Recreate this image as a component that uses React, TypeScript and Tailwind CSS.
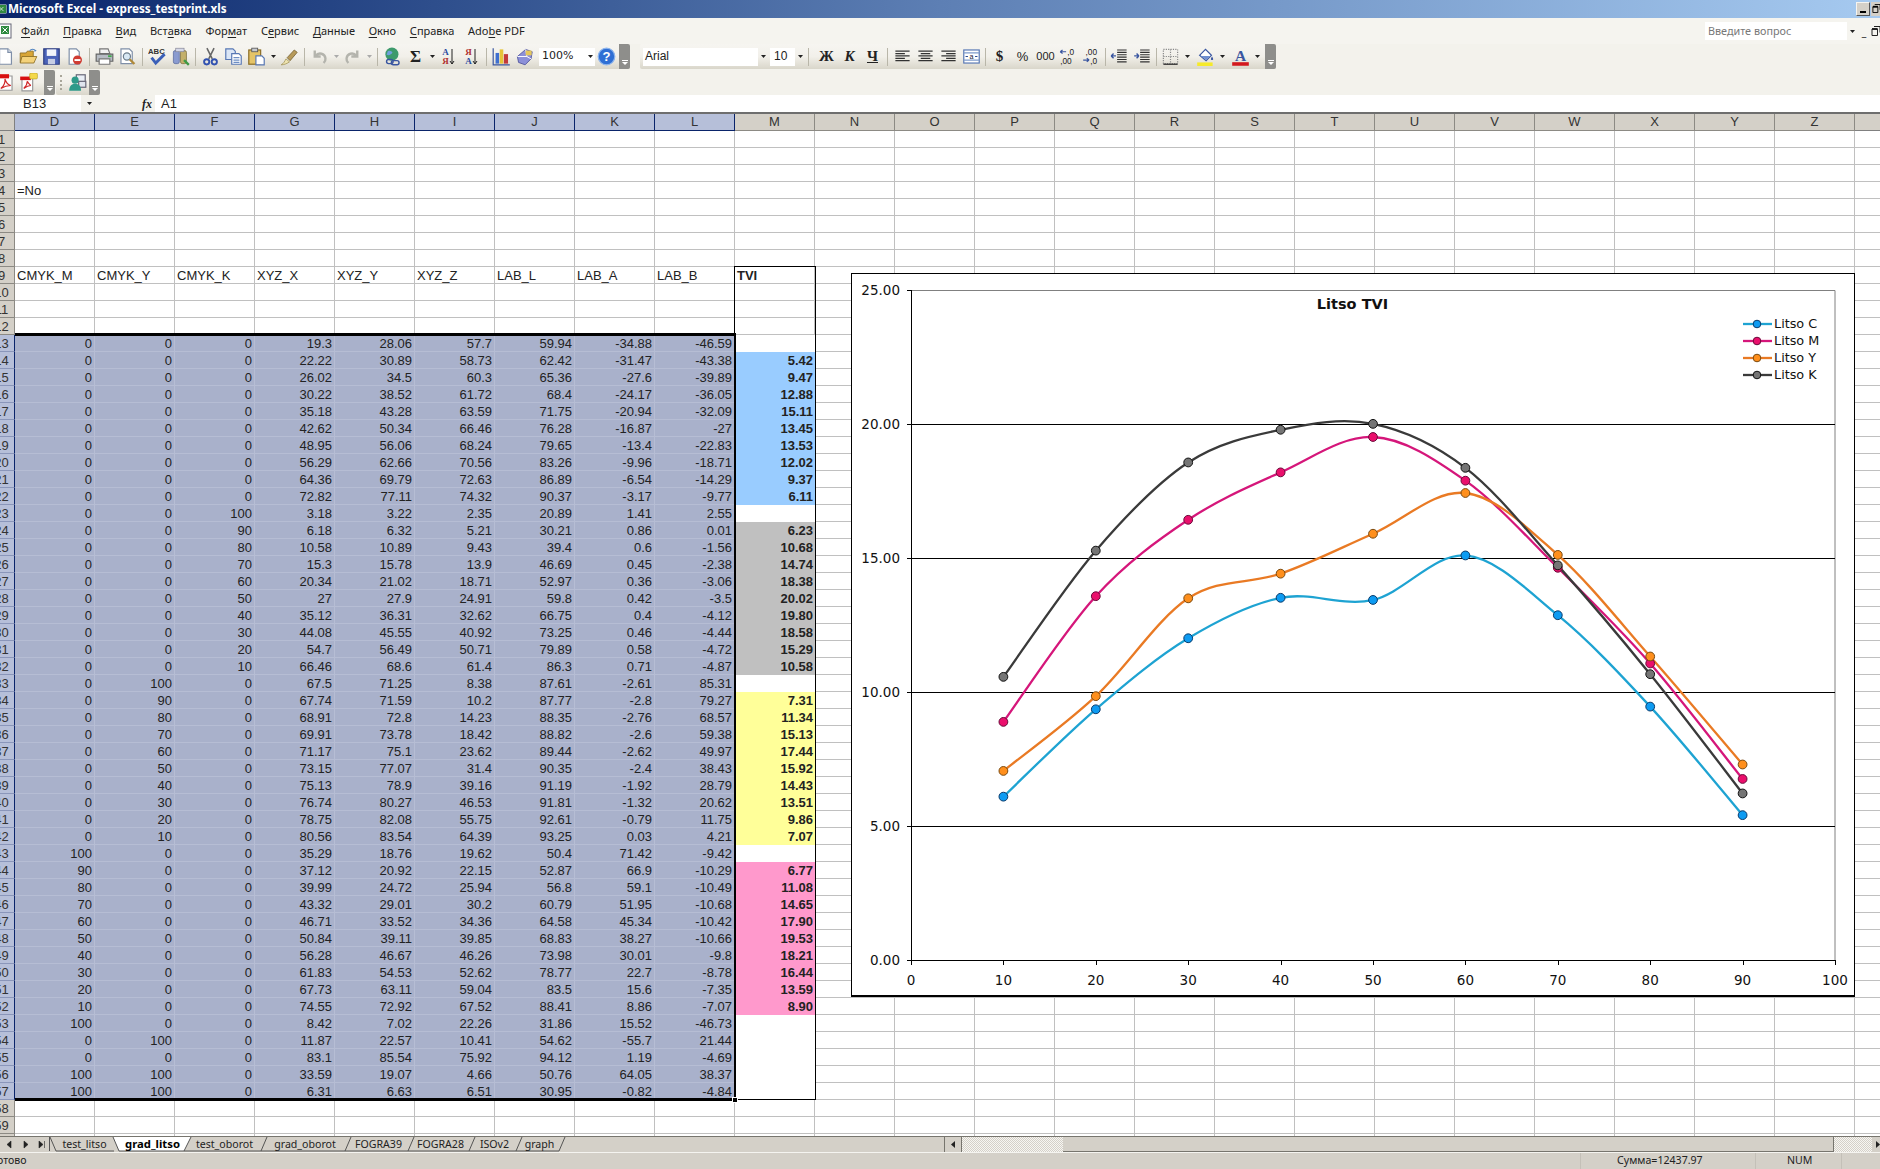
import type { ReactNode } from "react";

const COLS = ["D", "E", "F", "G", "H", "I", "J", "K", "L", "M", "N", "O", "P", "Q", "R", "S", "T", "U", "V", "W", "X", "Y", "Z"];

// rows 13..57: CMYK_M CMYK_Y CMYK_K XYZ_X XYZ_Y XYZ_Z LAB_L LAB_A LAB_B | TVI
const DATA = `0 0 0 19.3 28.06 57.7 59.94 -34.88 -46.59 -
0 0 0 22.22 30.89 58.73 62.42 -31.47 -43.38 5.42
0 0 0 26.02 34.5 60.3 65.36 -27.6 -39.89 9.47
0 0 0 30.22 38.52 61.72 68.4 -24.17 -36.05 12.88
0 0 0 35.18 43.28 63.59 71.75 -20.94 -32.09 15.11
0 0 0 42.62 50.34 66.46 76.28 -16.87 -27 13.45
0 0 0 48.95 56.06 68.24 79.65 -13.4 -22.83 13.53
0 0 0 56.29 62.66 70.56 83.26 -9.96 -18.71 12.02
0 0 0 64.36 69.79 72.63 86.89 -6.54 -14.29 9.37
0 0 0 72.82 77.11 74.32 90.37 -3.17 -9.77 6.11
0 0 100 3.18 3.22 2.35 20.89 1.41 2.55 -
0 0 90 6.18 6.32 5.21 30.21 0.86 0.01 6.23
0 0 80 10.58 10.89 9.43 39.4 0.6 -1.56 10.68
0 0 70 15.3 15.78 13.9 46.69 0.45 -2.38 14.74
0 0 60 20.34 21.02 18.71 52.97 0.36 -3.06 18.38
0 0 50 27 27.9 24.91 59.8 0.42 -3.5 20.02
0 0 40 35.12 36.31 32.62 66.75 0.4 -4.12 19.80
0 0 30 44.08 45.55 40.92 73.25 0.46 -4.44 18.58
0 0 20 54.7 56.49 50.71 79.89 0.58 -4.72 15.29
0 0 10 66.46 68.6 61.4 86.3 0.71 -4.87 10.58
0 100 0 67.5 71.25 8.38 87.61 -2.61 85.31 -
0 90 0 67.74 71.59 10.2 87.77 -2.8 79.27 7.31
0 80 0 68.91 72.8 14.23 88.35 -2.76 68.57 11.34
0 70 0 69.91 73.78 18.42 88.82 -2.6 59.38 15.13
0 60 0 71.17 75.1 23.62 89.44 -2.62 49.97 17.44
0 50 0 73.15 77.07 31.4 90.35 -2.4 38.43 15.92
0 40 0 75.13 78.9 39.16 91.19 -1.92 28.79 14.43
0 30 0 76.74 80.27 46.53 91.81 -1.32 20.62 13.51
0 20 0 78.75 82.08 55.75 92.61 -0.79 11.75 9.86
0 10 0 80.56 83.54 64.39 93.25 0.03 4.21 7.07
100 0 0 35.29 18.76 19.62 50.4 71.42 -9.42 -
90 0 0 37.12 20.92 22.15 52.87 66.9 -10.29 6.77
80 0 0 39.99 24.72 25.94 56.8 59.1 -10.49 11.08
70 0 0 43.32 29.01 30.2 60.79 51.95 -10.68 14.65
60 0 0 46.71 33.52 34.36 64.58 45.34 -10.42 17.90
50 0 0 50.84 39.11 39.85 68.83 38.27 -10.66 19.53
40 0 0 56.28 46.67 46.26 73.98 30.01 -9.8 18.21
30 0 0 61.83 54.53 52.62 78.77 22.7 -8.78 16.44
20 0 0 67.73 63.11 59.04 83.5 15.6 -7.35 13.59
10 0 0 74.55 72.92 67.52 88.41 8.86 -7.07 8.90
100 0 0 8.42 7.02 22.26 31.86 15.52 -46.73 -
0 100 0 11.87 22.57 10.41 54.62 -55.7 21.44 -
0 0 0 83.1 85.54 75.92 94.12 1.19 -4.69 -
100 100 0 33.59 19.07 4.66 50.76 64.05 38.37 -
100 100 0 6.31 6.63 6.51 30.95 -0.82 -4.84 -`
  .split("\n")
  .map((l) => l.split(" "));

const HEAD9 = ["CMYK_M", "CMYK_Y", "CMYK_K", "XYZ_X", "XYZ_Y", "XYZ_Z", "LAB_L", "LAB_A", "LAB_B"];

const SERIES = [
  { name: "Litso C", line: "#1ea3d2", dot: "#0d9bf2", edge: "#0a3a6a", v: [6.11, 9.37, 12.02, 13.53, 13.45, 15.11, 12.88, 9.47, 5.42] },
  { name: "Litso M", line: "#d5167a", dot: "#ea0f6c", edge: "#6a0a3a", v: [8.9, 13.59, 16.44, 18.21, 19.53, 17.9, 14.65, 11.08, 6.77] },
  { name: "Litso Y", line: "#e97a24", dot: "#ff8f1c", edge: "#7a4a10", v: [7.07, 9.86, 13.51, 14.43, 15.92, 17.44, 15.13, 11.34, 7.31] },
  { name: "Litso K", line: "#3a3a3a", dot: "#757575", edge: "#111111", v: [10.58, 15.29, 18.58, 19.8, 20.02, 18.38, 14.74, 10.68, 6.23] },
];

const px = (x: number) => 60 + x * 9.24;
const py = (v: number) => 687.4 - v * 26.8;

function smooth(v: number[]) {
  const p = v.map((y, i) => [px((i + 1) * 10), py(y)]);
  let d = `M${p[0][0]} ${p[0][1]}`;
  for (let i = 0; i < p.length - 1; i++) {
    const a = p[i - 1] || p[i];
    const b = p[i];
    const c = p[i + 1];
    const e = p[i + 2] || c;
    d += `C${b[0] + (c[0] - a[0]) / 6} ${b[1] + (c[1] - a[1]) / 6} ${c[0] - (e[0] - b[0]) / 6} ${c[1] - (e[1] - b[1]) / 6} ${c[0]} ${c[1]}`;
  }
  return d;
}

function Chart() {
  const chartFont = "'DejaVu Sans', sans-serif";
  return (
    <svg width="1005" height="724" viewBox="0 0 1005 724" className="block">
      <rect x="0.5" y="0.5" width="1003" height="722" fill="#fff" stroke="#000" />
      <line x1="0" y1="723" x2="1004" y2="723" stroke="#000" strokeWidth="2" />
      <path d="M60 17.5H984V687.5" fill="none" stroke="#808080" />
      {[5, 10, 15, 20].map((v) => (
        <line key={v} x1="60" x2="984" y1={Math.round(py(v)) + 0.5} y2={Math.round(py(v)) + 0.5} stroke="#000" />
      ))}
      <path d="M60.5 17V692M56 687.5H984" fill="none" stroke="#000" />
      {[0, 5, 10, 15, 20, 25].map((v) => (
        <g key={v}>
          <line x1="56" x2="60" y1={Math.round(py(v)) + 0.5} y2={Math.round(py(v)) + 0.5} stroke="#000" />
          <text x="49" y={py(v)} textAnchor="end" dominantBaseline="central" fontSize="13.5" fontFamily={chartFont} fill="#111">
            {v.toFixed(2)}
          </text>
        </g>
      ))}
      {[0, 10, 20, 30, 40, 50, 60, 70, 80, 90, 100].map((x) => (
        <g key={x}>
          <line x1={Math.round(px(x)) + 0.5} x2={Math.round(px(x)) + 0.5} y1="687" y2="692" stroke="#000" />
          <text x={px(x)} y="707" textAnchor="middle" dominantBaseline="central" fontSize="13.5" fontFamily={chartFont} fill="#111">
            {x}
          </text>
        </g>
      ))}
      <text x="501.5" y="31" textAnchor="middle" dominantBaseline="central" fontSize="14.5" fontWeight="700" fontFamily={chartFont} fill="#111">
        Litso TVI
      </text>
      {SERIES.map((s) => (
        <path key={s.name} d={smooth(s.v)} fill="none" stroke={s.line} strokeWidth="2.3" />
      ))}
      {SERIES.map((s) =>
        s.v.map((y, i) => (
          <circle key={s.name + i} cx={px((i + 1) * 10)} cy={py(y)} r="4.4" fill={s.dot} stroke={s.edge} strokeWidth="1" />
        )),
      )}
      {SERIES.map((s, i) => (
        <g key={s.name}>
          <line x1="892" x2="921" y1={51 + i * 17} y2={51 + i * 17} stroke={s.line} strokeWidth="2.3" />
          <circle cx="906" cy={51 + i * 17} r="3.8" fill={s.dot} stroke={s.edge} />
          <text x="923" y={50.5 + i * 17} dominantBaseline="central" fontSize="12.8" fontFamily={chartFont} fill="#111">
            {s.name}
          </text>
        </g>
      ))}
    </svg>
  );
}

function Ico({ children }: { children: ReactNode }) {
  return (
    <svg viewBox="0 0 16 16" className="w-[19px] h-[19px] block">
      {children}
    </svg>
  );
}

const I = {
  doc: <Ico><path d="M3 1.500h7l3 3v10H3z" fill="#fff" stroke="#7f8fa8" /><path d="M10 1.500v3h3" fill="#dfe6f0" stroke="#7f8fa8" /></Ico>,
  open: <Ico><path d="M1 5h5l1-1.500h5V13H1z" fill="#d9a637" stroke="#8a6a20" strokeWidth=".7" /><path d="M2.500 8H15l-2.500 5.500H1z" fill="#f4d27a" stroke="#8a6a20" strokeWidth=".7" /><path d="M9 3c1.500-1.500 3.500-1.500 5 0l-1 .5" fill="none" stroke="#4a7fbe" /></Ico>,
  save: <Ico><path d="M1.500 1.500h13v13h-13z" fill="#4a62b8" stroke="#2c3c80" /><rect x="4" y="2" width="8" height="5.500" fill="#f2f4fa" /><rect x="5" y="10" width="6" height="4.500" fill="#c6cde4" /></Ico>,
  perm: <Ico><path d="M3.500 1.500h6l2.500 2.500v10.500H3.500z" fill="#fff" stroke="#7f8fa8" /><circle cx="10.500" cy="11" r="3.800" fill="#cf3b32" /><rect x="8" y="10.200" width="5" height="1.600" fill="#fff" /></Ico>,
  print: <Ico><path d="M4 1.500h7l1.500 4H4z" fill="#f2f2f2" stroke="#777" /><path d="M1 6h14v6H1z" fill="#b7bcc4" stroke="#666" /><path d="M3.500 10h9v4.500h-9z" fill="#fff" stroke="#777" /><rect x="11" y="7" width="3" height="1.500" fill="#3fa84a" /></Ico>,
  preview: <Ico><path d="M2.500 1.500h7l2.500 2.500v10H2.500z" fill="#fff" stroke="#7f8fa8" /><circle cx="7.500" cy="8" r="3" fill="#d8e8f4" stroke="#6b7c8c" /><path d="M9.800 10.300l4 4" stroke="#b08a3a" strokeWidth="2" /></Ico>,
  spell: <Ico><text x="0" y="6" fontSize="6.500" fontWeight="700" fontFamily="'Liberation Sans',sans-serif" fill="#333">ABC</text><path d="M3 9l3.500 4.500L14 6" fill="none" stroke="#3a5fb8" strokeWidth="2.400" /></Ico>,
  research: <Ico><rect x="2" y="3" width="5" height="11" rx="1.500" fill="#8a9bd0" stroke="#55659a" strokeWidth=".6" /><rect x="8" y="3" width="5" height="11" rx="1.500" fill="#c4b06a" stroke="#776a3a" strokeWidth=".6" /><rect x="4" y="1" width="7" height="3" fill="#d5d8e8" stroke="#778" strokeWidth=".5" /><path d="M11 11l4 4" stroke="#3f9a45" strokeWidth="2" /></Ico>,
  cut: <Ico><path d="M5 1l4.500 9M11 1l-4.500 9" stroke="#666" strokeWidth="1.300" /><circle cx="4.800" cy="12.500" r="2.200" fill="none" stroke="#3252b0" strokeWidth="1.600" /><circle cx="11.200" cy="12.500" r="2.200" fill="none" stroke="#3252b0" strokeWidth="1.600" /></Ico>,
  copy: <Ico><path d="M1.500 1.500h6l2 2v7h-8z" fill="#dbe6f6" stroke="#5878b4" /><path d="M6.500 5.500h6l2 2v7h-8z" fill="#fff" stroke="#5878b4" /><path d="M8 9h5M8 11h5M8 13h5" stroke="#6d8ec4" /></Ico>,
  paste: <Ico><rect x="1.500" y="2.500" width="10" height="12" fill="#e5c467" stroke="#8a6c25" /><rect x="4" y="1" width="5" height="3" fill="#c7cbd2" stroke="#555" strokeWidth=".7" /><path d="M7.500 7.500h5l2 2v5.500h-7z" fill="#fff" stroke="#5878b4" /></Ico>,
  painter: <Ico><path d="M1 15c2-1 3-3 4-5l3 2.500c-2 1.500-4.500 2.500-7 2.500z" fill="#efe4b0" stroke="#9a8a4a" strokeWidth=".6" /><path d="M6 9l2.500 2.500 6-7L12 2.500z" fill="#b79a5a" stroke="#6a5526" strokeWidth=".6" /></Ico>,
  undo: <Ico><path d="M4 3v5h5M4.500 7.500c3-3.500 8-2 8.500 2 .2 1.500-.5 3-1.500 4" fill="none" stroke="#b4b4ad" strokeWidth="2" /></Ico>,
  redo: <Ico><path d="M12 3v5H7M11.500 7.500c-3-3.500-8-2-8.500 2-.2 1.500.5 3 1.500 4" fill="none" stroke="#b4b4ad" strokeWidth="2" /></Ico>,
  link: <Ico><circle cx="7.500" cy="6" r="5.500" fill="#3d9a6c" /><path d="M4 3.500c2-1 3 0 4 1-1 2-3 3-5 2z" fill="#6f9fdc" /><rect x="3" y="10.500" width="5.500" height="3.500" rx="1.700" fill="none" stroke="#3a56a0" strokeWidth="1.200" /><rect x="7" y="11.500" width="6.500" height="3.500" rx="1.700" fill="none" stroke="#3a56a0" strokeWidth="1.200" /></Ico>,
  chart: <Ico><path d="M1 1v14h14" fill="none" stroke="#3a56a0" /><rect x="3" y="5" width="3" height="9" fill="#3f6fd0" /><rect x="6.500" y="2" width="3" height="12" fill="#e6c437" /><rect x="10" y="6" width="3.500" height="8" fill="#c23a3a" /></Ico>,
  draw: <Ico><path d="M2 8L9 2l5.500 2-1 6-5 5L3 13z" fill="#8c90d8" stroke="#4a4f98" strokeWidth=".7" /><path d="M9 2l1 6 3.500 2M10 8l-8 0" fill="none" stroke="#fff" strokeWidth=".8" /><rect x="9" y="3" width="5" height="4" fill="#e5c75a" /></Ico>,
  help: <Ico><circle cx="8" cy="8" r="7" fill="#2f6fd4" stroke="#8db4ec" /><text x="8" y="12" textAnchor="middle" fontSize="11" fontWeight="700" fontFamily="'Liberation Sans',sans-serif" fill="#fff">?</text></Ico>,
  alignL: <Ico><path d="M2 3.500h12M2 5.500h8M2 7.500h12M2 9.500h8M2 11.500h12" stroke="#333" /></Ico>,
  alignC: <Ico><path d="M2 3.500h12M4 5.500h8M2 7.500h12M4 9.500h8M2 11.500h12" stroke="#333" /></Ico>,
  alignR: <Ico><path d="M2 3.500h12M6 5.500h8M2 7.500h12M6 9.500h8M2 11.500h12" stroke="#333" /></Ico>,
  merge: <Ico><rect x="1.500" y="2.500" width="13" height="11" fill="#fff" stroke="#5878b4" /><path d="M1.500 5h13M1.500 11h13" stroke="#7f9ccc" /><text x="8" y="10.200" textAnchor="middle" fontSize="6" fontFamily="'Liberation Sans',sans-serif" fill="#223">a</text><path d="M3 8h2M11 8h2" stroke="#2a4a90" /></Ico>,
  incD: <Ico><path d="M1 4h5M1 4l2-1.500M1 4l2 1.500" stroke="#3a56a0" /><text x="7" y="6.500" fontSize="7" fontFamily="'Liberation Sans',sans-serif" fill="#222">,0</text><text x="1" y="14" fontSize="7" fontFamily="'Liberation Sans',sans-serif" fill="#222">,00</text></Ico>,
  decD: <Ico><text x="3" y="6.500" fontSize="7" fontFamily="'Liberation Sans',sans-serif" fill="#222">,00</text><path d="M1 11h5M6 11l-2-1.500M6 11l-2 1.500" stroke="#3a56a0" /><text x="7" y="14" fontSize="7" fontFamily="'Liberation Sans',sans-serif" fill="#222">,0</text></Ico>,
  indL: <Ico><path d="M6 2.500h8M6 4.500h8M6 6.500h8M6 8.500h8M6 10.500h8M6 12.500h8" stroke="#333" /><path d="M5 7.500H1M1 7.500l2-2M1 7.500l2 2" stroke="#3a56a0" strokeWidth="1.200" /></Ico>,
  indR: <Ico><path d="M6 2.500h8M6 4.500h8M6 6.500h8M6 8.500h8M6 10.500h8M6 12.500h8" stroke="#333" /><path d="M1 7.500h4M5 7.500l-2-2M5 7.500l-2 2" stroke="#3a56a0" strokeWidth="1.200" /></Ico>,
  border: <Ico><rect x="2" y="2" width="12" height="12" fill="none" stroke="#888" strokeDasharray="1 1" /><path d="M2 8h12M8 2v12" stroke="#888" strokeDasharray="1 1" /><path d="M2 14.500h12" stroke="#222" /></Ico>,
  fill: <Ico><path d="M3 7l5-5 5 5-4.500 4.500z" fill="#fff" stroke="#3a56a0" /><path d="M4 7.500h8l-3.500 3.500z" fill="#6f8fd0" /><path d="M13.500 8c1 1.500 1.500 3 0 3s-1-1.500 0-3z" fill="#3a56a0" /><rect x="1" y="13" width="13" height="3" fill="#f6ea2a" /></Ico>,
  color: <Ico><text x="8" y="11.500" textAnchor="middle" fontSize="13" fontWeight="700" fontFamily="'Liberation Serif',serif" fill="#3a56a0">A</text><rect x="1" y="12.800" width="14" height="3" fill="#d3181e" /></Ico>,
  pdf: <Ico><path d="M2.500 2.500h11v12h-11z" fill="#fff" stroke="#999" /><rect x="1" y="1" width="10" height="3.500" fill="#d80f10" /><path d="M4 13c3-2 4-6 3.500-8 1 3 3 5 5 5.500-3 0-6 1-8.500 2.500z" fill="none" stroke="#d0282a" /></Ico>,
  pdf2: <Ico><path d="M2.500 4h9v11h-9z" fill="#fff" stroke="#999" /><rect x="1" y="3" width="9" height="3" fill="#d80f10" /><path d="M4 13c2-2 3-4 3-6 1 2 2 3 3 3.500-2 0-4 1-6 2.500z" fill="none" stroke="#d0282a" /><rect x="9" y="0" width="6.500" height="5" rx="1" fill="#f4d84a" stroke="#b09a20" strokeWidth=".5" /></Ico>,
  review: <Ico><rect x="7" y="1.500" width="7.500" height="6" fill="#e9eef6" stroke="#667" /><rect x="9" y="7" width="6" height="5" fill="#dfe5ee" stroke="#667" /><circle cx="6" cy="6" r="3" fill="#2e9a8a" /><path d="M1 15c0-4 2-6 5-6s5 2 5 6z" fill="#2e9a8a" /></Ico>,
};

function Btn({ children, cls = "" }: { children: ReactNode; cls?: string }) {
  return <div className={`w-[23px] h-full shrink-0 flex items-center justify-center ${cls}`}>{children}</div>;
}

function Drop({ color = "#222", w = "w-[10px]" }: { color?: string; w?: string }) {
  return (
    <div className={`${w} h-full shrink-0 flex items-center justify-center`}>
      <svg width="5" height="3" viewBox="0 0 5 3" className="block">
        <path d="M0 0h5L2.500 3z" fill={color} />
      </svg>
    </div>
  );
}

function Sep({ w = "w-[7px]" }: { w?: string }) {
  return (
    <div className={`${w} h-full shrink-0 flex items-center justify-center`}>
      <div className="w-px h-[18px] bg-[#b9b6a9]" />
    </div>
  );
}

function Handle({ cls = "" }: { cls?: string }) {
  return (
    <div className={`w-[11px] h-full shrink-0 bg-[#8e8e8b] rounded-r-[2px] flex flex-col items-center justify-end pb-[4px] gap-px ${cls}`}>
      <div className="w-[6px] h-px bg-white" />
      <svg width="6" height="3" viewBox="0 0 6 3" className="block">
        <path d="M0 0h6L3 3z" fill="#fff" />
      </svg>
    </div>
  );
}

function U({ children }: { children: ReactNode }) {
  return <span className="underline underline-offset-2">{children}</span>;
}

function Menu() {
  return (
    <div className="h-[26px] bg-[#f5f4ef] flex items-center font-['Noto_Sans',sans-serif] text-[11px] text-[#222]">
      <div className="w-[21px] shrink-0">
        <svg viewBox="0 0 14 16" className="w-[14px] h-[16px] -ml-[2px] block">
          <rect x="1" y="1" width="12" height="14" fill="#fff" stroke="#667" />
          <rect x="3" y="3" width="8" height="8" fill="#2f8a3f" />
          <path d="M4.500 4.500l5 5M9.500 4.500l-5 5" stroke="#fff" />
        </svg>
      </div>
      <div className="flex gap-[13.7px]">
        <span><U>Ф</U>айл</span>
        <span><U>П</U>равка</span>
        <span><U>В</U>ид</span>
        <span>Вст<U>а</U>вка</span>
        <span>Фор<U>м</U>ат</span>
        <span>С<U>е</U>рвис</span>
        <span><U>Д</U>анные</span>
        <span><U>О</U>кно</span>
        <span><U>С</U>правка</span>
        <span>Ado<U>b</U>e PDF</span>
      </div>
      <div className="ml-auto w-[142px] h-[18px] bg-white text-[#777] pl-[3px] leading-[18px] text-[10.8px]">Введите вопрос</div>
      <Drop w="w-[10px]" />
      <span className="w-[14px] text-center font-bold leading-none">_</span>
      <span className="w-[9px] overflow-hidden">
        <svg viewBox="0 0 10 10" className="w-[10px] h-[10px] block">
          <path d="M3 .5h6v6M1 3h5.500v6.500H1z" fill="none" stroke="#222" />
          <path d="M1 3h5.500" stroke="#222" strokeWidth="2" />
        </svg>
      </span>
    </div>
  );
}

function InputBox({ w, children }: { w: string; children: ReactNode }) {
  return <div className={`${w} h-[18px] bg-white shrink-0 leading-[16px] pl-[2px] text-[12px] text-[#222] font-['Liberation_Sans',sans-serif] overflow-hidden`}>{children}</div>;
}

const bar = "h-full flex items-center bg-gradient-to-b from-[#f6f5f1] via-[#f2f0ea] to-[#d9d6ca] rounded-[2px]";
const serif = "font-['Liberation_Serif',serif] font-bold text-[15px] text-[#222]";

function Toolbars() {
  return (
    <>
      <div className="h-[25px] bg-[#f3f2ec] flex">
        <div className={`${bar} w-[636px] -ml-[6px] shrink-0`}>
          <Btn>{I.doc}</Btn>
          <Btn>{I.open}</Btn>
          <Btn>{I.save}</Btn>
          <Btn>{I.perm}</Btn>
          <Sep />
          <Btn>{I.print}</Btn>
          <Btn>{I.preview}</Btn>
          <Sep />
          <Btn>{I.spell}</Btn>
          <Btn>{I.research}</Btn>
          <Sep />
          <Btn>{I.cut}</Btn>
          <Btn>{I.copy}</Btn>
          <Btn>{I.paste}</Btn>
          <Drop />
          <Btn>{I.painter}</Btn>
          <Sep />
          <Btn>{I.undo}</Btn>
          <Drop color="#aaa" />
          <Btn>{I.redo}</Btn>
          <Drop color="#aaa" />
          <Sep />
          <Btn>{I.link}</Btn>
          <Btn><span className={serif + " text-[17px]"}>Σ</span></Btn>
          <Drop />
          <Btn>
            <span className="flex items-center">
              <span className="flex flex-col font-['Liberation_Serif',serif] text-[9px] leading-[9px] font-bold"><span className="text-[#2a4aa0]">A</span><span className="text-[#b03030]">Я</span></span>
              <svg width="6" height="16" viewBox="0 0 6 16"><path d="M3 0v15M1 12l2 3 2-3" fill="none" stroke="#222" /></svg>
            </span>
          </Btn>
          <Btn>
            <span className="flex items-center">
              <span className="flex flex-col font-['Liberation_Serif',serif] text-[9px] leading-[9px] font-bold"><span className="text-[#b03030]">Я</span><span className="text-[#2a4aa0]">A</span></span>
              <svg width="6" height="16" viewBox="0 0 6 16"><path d="M3 0v15M1 12l2 3 2-3" fill="none" stroke="#222" /></svg>
            </span>
          </Btn>
          <Sep />
          <Btn>{I.chart}</Btn>
          <Btn>{I.draw}</Btn>
          <div className="w-[56px] h-[18px] bg-white shrink-0 flex items-center ml-[3px]">
            <span className="flex-1 pl-[3px] text-[11px] font-['DejaVu_Sans',sans-serif] text-[#222]">100%</span>
            <Drop />
          </div>
          <Btn>{I.help}</Btn>
          <Handle cls="ml-auto" />
        </div>
        <div className={`${bar} w-[636px] ml-[10px] pl-[3px] shrink-0`}>
          <InputBox w="w-[115px]">Arial</InputBox>
          <Drop />
          <InputBox w="w-[25px] ml-[2px]"><span className="pl-[2px]">10</span></InputBox>
          <Drop />
          <Sep />
          <Btn cls="ml-[3px]"><span className={serif}>Ж</span></Btn>
          <Btn><span className={serif + " italic"}>К</span></Btn>
          <Btn><span className={serif + " underline"}>Ч</span></Btn>
          <Sep />
          <Btn>{I.alignL}</Btn>
          <Btn>{I.alignC}</Btn>
          <Btn>{I.alignR}</Btn>
          <Btn>{I.merge}</Btn>
          <Sep w="w-[5px]" />
          <Btn><span className={serif}>$</span></Btn>
          <Btn><span className="font-['Liberation_Sans',sans-serif] text-[13px] text-[#222]">%</span></Btn>
          <Btn><span className="font-['Liberation_Sans',sans-serif] text-[11px] text-[#222]">000</span></Btn>
          <Btn>{I.incD}</Btn>
          <Btn>{I.decD}</Btn>
          <Sep w="w-[5px]" />
          <Btn>{I.indL}</Btn>
          <Btn>{I.indR}</Btn>
          <Sep w="w-[5px]" />
          <Btn>{I.border}</Btn>
          <Drop />
          <Btn cls="ml-[2px]">{I.fill}</Btn>
          <Drop />
          <Btn cls="ml-[2px]">{I.color}</Btn>
          <Drop />
          <Handle cls="ml-auto" />
        </div>
      </div>
      <div className="h-px bg-[#f3f2ec]" />
      <div className="h-[25px] bg-[#f3f2ec] flex">
        <div className={`${bar} w-[61px] -ml-[6px] shrink-0`}>
          <Btn>{I.pdf}</Btn>
          <Btn>{I.pdf2}</Btn>
          <Handle cls="ml-auto" />
        </div>
        <div className={`${bar} w-[44px] ml-[1px] shrink-0`}>
          <div className="w-[10px] flex justify-center">
            <div className="w-[2px] h-[15px] border-l-2 border-dotted border-[#a9a69a]" />
          </div>
          <Btn>{I.review}</Btn>
          <Handle cls="ml-auto" />
        </div>
      </div>
    </>
  );
}

function FormulaBar() {
  return (
    <div className="h-[17px] bg-[#f3f2ec] flex items-center font-['Liberation_Sans',sans-serif] text-[13px] text-[#222]">
      <div className="w-[81px] h-full bg-white pl-[23px] leading-[17px]">B13</div>
      <Drop w="w-[16px]" />
      <span className="ml-[45px] w-[13px] font-['Liberation_Serif',serif] italic font-bold text-[12px]">fx</span>
      <div className="flex-1 h-full bg-white pl-[6px] leading-[17px]">A1</div>
    </div>
  );
}

function ColHeader() {
  return (
    <div className="h-[19px] flex border-t-2 border-[#6e6e6e] bg-[#d4d0c8] font-['Liberation_Sans',sans-serif] text-[13px] text-[#333] shrink-0">
      <div className="w-[15px] shrink-0 border-r border-b border-[#808080]" />
      {COLS.map((c, i) => (
        <div
          key={c}
          className={`w-[80px] shrink-0 text-center leading-[16px] border-r border-b ${i < 9 ? "bg-[#b6bfd9] border-[#0a246a]" : "border-[#8c8a84]"}`}
        >
          {c}
        </div>
      ))}
      <div className="flex-1 border-b border-[#808080]" />
    </div>
  );
}

function tviBg(row: number) {
  if (row >= 14 && row <= 22) return "bg-[#99ccff]";
  if (row >= 24 && row <= 32) return "bg-[#c0c0c0]";
  if (row >= 34 && row <= 42) return "bg-[#ffff99]";
  if (row >= 44 && row <= 52) return "bg-[#ff99cc]";
  return "bg-white";
}

function Row({ n }: { n: number }) {
  const sel = n >= 13 && n <= 57;
  const vals = sel ? DATA[n - 13] : null;
  return (
    <div className="h-[17px] flex shrink-0 font-['Liberation_Sans',sans-serif] text-[13px] leading-[17px] text-[#222]">
      <div className={`w-[15px] shrink-0 overflow-hidden border-r border-b ${sel ? "bg-[#b6bfd9] border-[#0a246a] border-b-[#8a96ba]" : "bg-[#d4d0c8] border-[#8c8a84]"}`}>
        <div className="w-[30px] -ml-[13.5px] text-center text-[#333]">{n}</div>
      </div>
      {COLS.map((c, i) => {
        if (vals && i < 9) {
          return (
            <div key={c} className="w-[80px] shrink-0 bg-[#a9b1cb] border-r border-b border-[#b6bdd4] text-right pr-[2px]">
              {vals[i]}
            </div>
          );
        }
        if (vals && i === 9) {
          return (
            <div key={c} className={`w-[80px] shrink-0 text-right pr-[2px] font-bold ${tviBg(n)}`}>
              {vals[9] === "-" ? "" : vals[9]}
            </div>
          );
        }
        let text = "";
        if (n === 9 && i < 9) text = HEAD9[i];
        if (n === 9 && i === 9) text = "TVI";
        if (n === 4 && i === 0) text = "=No";
        return (
          <div key={c} className={`w-[80px] shrink-0 border-r border-b border-[#c0c0c0] pl-[2px] whitespace-nowrap ${n === 9 && i === 9 ? "font-bold" : ""}`}>
            {text}
          </div>
        );
      })}
      <div className="flex-1 border-b border-[#c0c0c0]" />
    </div>
  );
}

function Sheet() {
  const rows = Array.from({ length: 60 }, (_, i) => i + 1);
  return (
    <div className="flex-1 min-h-0 relative overflow-hidden bg-white">
      {rows.map((n) => (
        <Row key={n} n={n} />
      ))}
      <div className="absolute left-[734px] top-[135px] w-[82px] h-[834px] border border-black" />
      <div className="absolute left-[15px] top-[202px] w-[721px] h-[768px] border-t-[3px] border-b-[3px] border-r-2 border-black" />
      <div className="absolute left-[732px] top-[966px] w-[6px] h-[6px] bg-black border border-white" />
      <div className="absolute left-[851px] top-[142px]">
        <Chart />
      </div>
    </div>
  );
}

const TABS = [
  { t: "test_litso", w: "w-[69px]" },
  { t: "grad_litso", w: "w-[67px]", on: true },
  { t: "test_oborot", w: "w-[77px]" },
  { t: "grad_oborot", w: "w-[84px]" },
  { t: "FOGRA39", w: "w-[63px]" },
  { t: "FOGRA28", w: "w-[61px]" },
  { t: "ISOv2", w: "w-[47px]" },
  { t: "graph", w: "w-[43px]" },
];

function TabBar() {
  return (
    <div className="h-[16px] relative flex bg-[#d4d0c8] border-t border-[#77756e] font-['Noto_Sans',sans-serif] text-[10.6px] leading-[14px] text-[#222] shrink-0">
      <svg width="580" height="15" viewBox="0 0 580 15" className="absolute left-0 top-0">
        <path d="M7 7.500l4-3.500v7zM24 4l4 3.500-4 3.500zM39 4l4 3.500-4 3.500zM44.500 4v7" fill="#222" stroke="#222" strokeWidth=".6" />
        <path d="M113 0l6 14h65l7-14z" fill="#fff" />
        <path
          d="M49.500 0v14M50 0l6 14h58M113 0l6 14h65l7-14M184 14h77M267 0l-6 14M261 14h84M351 0l-6 14M345 14h63M414 0l-6 14M408 14h61M475 0l-6 14M469 14h47M522 0l-6 14M516 14h43M565 0l-6 14"
          fill="none"
          stroke="#555"
        />
      </svg>
      <div className="w-[50px] shrink-0" />
      {TABS.map((x) => (
        <div key={x.t} className={`${x.w} relative text-center shrink-0 ${x.on ? "font-bold text-black text-[11.3px]" : ""}`}>
          {x.t}
        </div>
      ))}
      <div className="ml-auto flex items-stretch">
        <div className="w-[18px] bg-[#d4d0c8] border-x border-[#77756e] flex items-center justify-center">
          <svg width="4" height="7" viewBox="0 0 4 7"><path d="M4 0v7L0 3.500z" fill="#222" /></svg>
        </div>
        <div className="w-[101px] bg-[repeating-conic-gradient(#d4d0c8_0_25%,#f7f6f2_0_50%)] bg-[length:2px_2px]" />
        <div className="w-[771px] bg-[#d4d0c8] border-r border-b border-[#77756e]" />
        <div className="w-[38px] bg-[repeating-conic-gradient(#d4d0c8_0_25%,#f7f6f2_0_50%)] bg-[length:2px_2px]" />
        <div className="w-[8px] bg-[#d4d0c8] flex items-center justify-end">
          <svg width="4" height="7" viewBox="0 0 4 7"><path d="M0 0v7l4-3.500z" fill="#222" /></svg>
        </div>
      </div>
    </div>
  );
}

function StatusBar() {
  return (
    <div className="h-[17px] bg-[#d4d0c8] border-t border-[#f5f4f0] flex items-center font-['Noto_Sans',sans-serif] text-[10.6px] text-[#222] shrink-0">
      <span className="-ml-[8px]">Готово</span>
      <div className="ml-auto w-[300px] h-full flex items-center border-l border-[#c4c0b8]">
        <span className="ml-[36px] w-[139px] border-r border-[#c4c0b8]">Сумма=12437.97</span>
        <span className="ml-[31px] w-[55px] border-r border-[#c4c0b8]">NUM</span>
      </div>
    </div>
  );
}

export default function App() {
  return (
    <div className="w-[1880px] h-[1169px] overflow-hidden flex flex-col bg-[#f3f2ec]">
      <div className="h-[18px] shrink-0 flex items-center bg-gradient-to-r from-[#0a246a] via-[#5d7fb4] to-[#a6caf0] font-['Noto_Sans',sans-serif] font-bold text-[11.7px] text-white">
        <svg viewBox="0 0 10 12" className="w-[7px] h-[14px] shrink-0 block">
          <rect x="-3" y="0" width="12" height="12" fill="#2f8a3f" stroke="#fff" strokeWidth=".6" />
          <path d="M-1 3l6 6M5 3l-6 6" stroke="#fff" />
        </svg>
        <span className="ml-[1px]">Microsoft Excel - express_testprint.xls</span>
        <div className="ml-auto flex gap-[1px]">
          <div className="w-[14px] h-[14px] bg-[#d4d0c8] border border-[#f5f4f0] border-r-[#555] border-b-[#555] flex items-end justify-center pb-[2px]">
            <div className="w-[6px] h-[2px] bg-black" />
          </div>
          <div className="w-[9px] h-[14px] bg-[#d4d0c8] overflow-hidden pt-[2px] pl-[1px]">
            <svg viewBox="0 0 10 10" className="w-[9px] h-[9px] block">
              <path d="M3 .5h6v6M1 3h5.500v6.500H1z" fill="none" stroke="#000" />
              <path d="M1 3h5.500" stroke="#000" strokeWidth="2" />
            </svg>
          </div>
        </div>
      </div>
      <Menu />
      <Toolbars />
      <FormulaBar />
      <ColHeader />
      <Sheet />
      <TabBar />
      <StatusBar />
    </div>
  );
}
